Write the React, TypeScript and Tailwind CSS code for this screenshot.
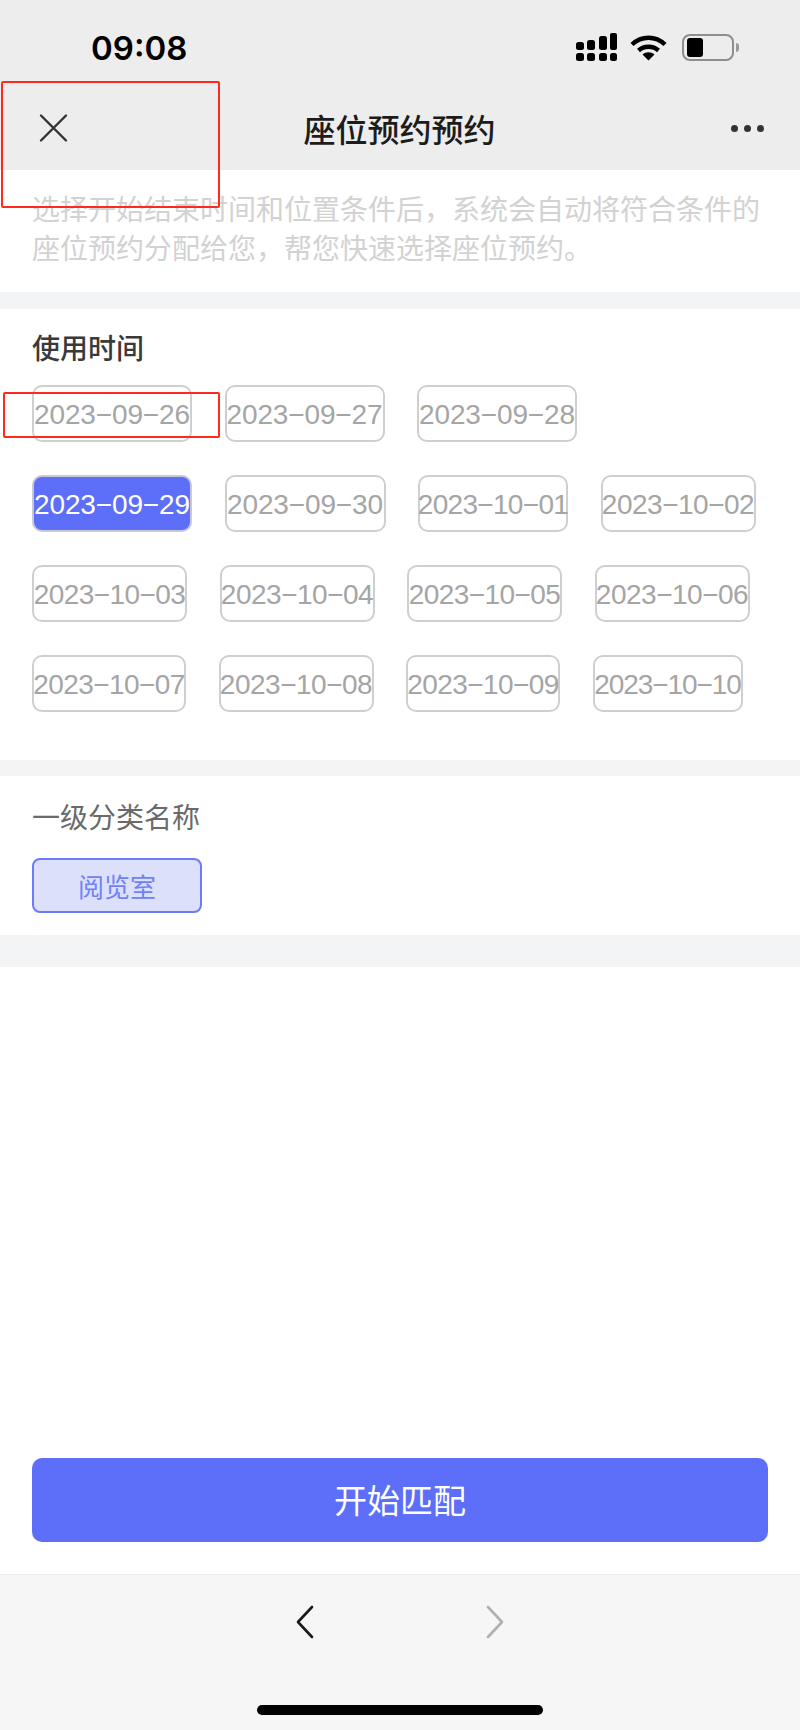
const dates = [
	{ label: "2023−09−26", cls: "w-[160px] tracking-[-0.15px]" },
	{ label: "2023−09−27", cls: "w-[160px] tracking-[-0.15px]" },
	{ label: "2023−09−28", cls: "w-[160px] tracking-[-0.15px]" },
	{ label: "2023−09−29", cls: "w-[160px] tracking-[-0.15px]", active: true },
	{ label: "2023−09−30", cls: "w-[161px] tracking-[-0.15px]" },
	{ label: "2023−10−01", cls: "w-[150px] tracking-[-0.7px]" },
	{ label: "2023−10−02", cls: "w-[155px] tracking-[-0.5px]" },
	{ label: "2023−10−03", cls: "w-[155px] tracking-[-0.6px]" },
	{ label: "2023−10−04", cls: "w-[155px] tracking-[-0.5px]" },
	{ label: "2023−10−05", cls: "w-[155px] tracking-[-0.6px]" },
	{ label: "2023−10−06", cls: "w-[155px] tracking-[-0.5px]" },
	{ label: "2023−10−07", cls: "w-[154px] tracking-[-0.6px]" },
	{ label: "2023−10−08", cls: "w-[155px] tracking-[-0.5px]" },
	{ label: "2023−10−09", cls: "w-[154px] tracking-[-0.6px]" },
	{ label: "2023−10−10", cls: "w-[150px] tracking-[-1.1px]" },
];

const cjk = "font-['Noto_Sans_CJK_SC',sans-serif]";

const StatusIcons = () => (
	<div className="flex items-center">
		{/* signal */}
		<svg width="42" height="29" viewBox="0 0 42 29" fill="#000">
			<rect x="0" y="9" width="8" height="8" rx="2.5" />
			<rect x="0" y="20" width="8" height="8" rx="2.5" />
			<rect x="11" y="7" width="8" height="10" rx="2.5" />
			<rect x="11" y="20" width="8" height="8" rx="2.5" />
			<rect x="23" y="3" width="8" height="14" rx="2.5" />
			<rect x="23" y="20" width="8" height="8" rx="2.5" />
			<rect x="34" y="0" width="7" height="17" rx="2" />
			<rect x="34" y="20" width="7" height="8" rx="2.5" />
		</svg>
		{/* wifi */}
		<svg className="ml-[12px]" width="37" height="27" viewBox="0 0 37 27">
			<path d="M2 10.5C11.5 1.5 25.5 1.5 35 10.5" fill="none" stroke="#000" strokeWidth="4.4" />
			<path d="M8.5 16.5C14 11.5 23 11.5 28.5 16.5" fill="none" stroke="#000" strokeWidth="4.4" />
			<path d="M12.5 20.5C16 17.6 21 17.6 24.5 20.5L18.5 26.5Z" fill="#000" />
		</svg>
		{/* battery */}
		<div className="ml-[15px] flex items-center">
			<div className="flex h-[27px] w-[52px] items-center rounded-[8px] border-2 border-[#8e8e8e] pl-[3px]">
				<div className="h-[19px] w-[16px] rounded-[3px] bg-black" />
			</div>
			<div className="ml-[2px] h-[9px] w-[3px] rounded-r-full bg-[#9a9a9a]" />
		</div>
	</div>
);

const App = () => {
	return (
		<div className={`relative flex h-[1730px] w-[800px] flex-col overflow-hidden bg-white ${cjk}`}>
			{/* header */}
			<header className="h-[170px] shrink-0 bg-[#ededed]">
				<div className="flex h-[92px] items-start justify-between pl-[91px] pr-[61px] pt-[33px]">
					<span className="font-['Inter',sans-serif] text-[33px] leading-[30px] font-semibold text-black">
						09:08
					</span>
					<StatusIcons />
				</div>
				<div className="flex h-[72px] items-center justify-between pl-[38px] pr-[36px]">
					<svg width="30" height="30" viewBox="0 0 30 30" stroke="#333" strokeWidth="2.4" strokeLinecap="round">
						<path d="M3 2.5 28 27.5M28 2.5 3 27.5" />
					</svg>
					<span className="text-[32px] leading-[44px] font-medium text-[#1c1c1c]">
						座位预约预约
					</span>
					<div className="flex gap-[6px]">
						<span className="h-[7px] w-[7px] rounded-full bg-[#333]" />
						<span className="h-[7px] w-[7px] rounded-full bg-[#333]" />
						<span className="h-[7px] w-[7px] rounded-full bg-[#333]" />
					</div>
				</div>
			</header>

			{/* description */}
			<section className="h-[122px] shrink-0 px-[32px] pt-[19px] text-[28px] leading-[39px] text-[#d2d2d2]">
				<p>选择开始结束时间和位置条件后，系统会自动将符合条件的</p>
				<p>座位预约分配给您，帮您快速选择座位预约。</p>
			</section>
			<div className="h-[17px] shrink-0 bg-[#f3f4f6]" />

			{/* dates */}
			<section className="h-[451px] shrink-0 px-[32px] pt-[18px]">
				<h2 className="text-[28px] leading-[40px] font-medium text-[#3a3a3a]">使用时间</h2>
				<div className="mt-[18px] flex flex-wrap gap-x-[32.5px] gap-y-[33px]">
					{dates.map((d) => (
						<div
							key={d.label}
							className={`flex h-[57px] items-center justify-center rounded-[10px] border-2 pt-[3px] font-['Liberation_Sans',sans-serif] text-[28px] whitespace-nowrap ${d.cls} ${
								d.active
									? "rounded-[6px] border-[#c8c8d8] bg-[#5d6ff8] text-white"
									: "border-[#cfcfcf] text-[#a5a5a5]"
							}`}
						>
							{d.label}
						</div>
					))}
				</div>
			</section>
			<div className="h-[16px] shrink-0 bg-[#f3f4f6]" />

			{/* category */}
			<section className="h-[159px] shrink-0 px-[32px] pt-[20px]">
				<h2 className="text-[28px] leading-[40px] text-[#6a6a6a]">一级分类名称</h2>
				<button className="mt-[22px] flex h-[55px] w-[170px] items-center justify-center rounded-[8px] border-2 border-[#6b7bfb] bg-[#dde0fb] text-[26px] text-[#6f80fb]">
					阅览室
				</button>
			</section>
			<div className="h-[32px] shrink-0 bg-[#f3f4f6]" />

			{/* action */}
			<div className="flex flex-1 flex-col justify-end px-[32px] pb-[32px]">
				<button className="flex h-[84px] w-full items-center justify-center rounded-[10px] bg-[#5d6ff8] text-[33px] text-white">
					开始匹配
				</button>
			</div>

			{/* bottom bar */}
			<footer className="flex h-[156px] shrink-0 flex-col items-center border-t border-[#ececec] bg-[#f6f6f6]">
				<div className="mt-[30px] flex gap-[172px]">
					<svg width="18" height="34" viewBox="0 0 18 34" fill="none" stroke="#1a1a1a" strokeWidth="2.6" strokeLinecap="round" strokeLinejoin="round">
						<path d="M16 2 2 17l14 15" />
					</svg>
					<svg width="18" height="34" viewBox="0 0 18 34" fill="none" stroke="#b0b0b0" strokeWidth="2.6" strokeLinecap="round" strokeLinejoin="round">
						<path d="M2 2l14 15L2 32" />
					</svg>
				</div>
				<div className="mt-[66px] h-[10px] w-[286px] rounded-full bg-black" />
			</footer>

			{/* red annotation boxes drawn over the screenshot */}
			<div className="pointer-events-none absolute top-[81px] left-[1px] h-[127px] w-[219px] rounded-[2px] border-2 border-[#ff2a1f]" />
			<div className="pointer-events-none absolute top-[392px] left-[3px] h-[46px] w-[217px] rounded-[2px] border-2 border-[#ff2a1f]" />
		</div>
	);
};

export default App;
